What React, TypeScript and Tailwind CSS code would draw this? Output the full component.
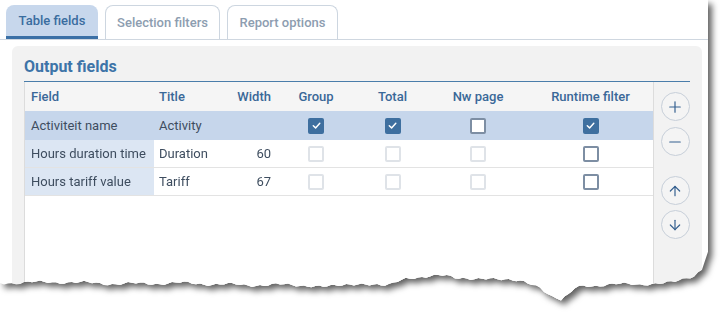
import { Plus, Minus, ArrowUp, ArrowDown } from 'lucide-react';

type Box = 'on' | 'off' | 'dis';

const rows: { field: string; title: string; width: string; boxes: Box[]; selected?: boolean }[] = [
  { field: 'Activiteit name', title: 'Activity', width: '', boxes: ['on', 'on', 'off', 'on'], selected: true },
  { field: 'Hours duration time', title: 'Duration', width: '60', boxes: ['dis', 'dis', 'dis', 'off'] },
  { field: 'Hours tariff value', title: 'Tariff', width: '67', boxes: ['dis', 'dis', 'dis', 'off'] },
];

// torn paper edge along the bottom
const tornEdge = () => {
  const anchors: [number, number][] = [
    [0, 283], [60, 282], [120, 284], [180, 283], [240, 285], [300, 285], [350, 286],
    [385, 284], [410, 279], [430, 275], [455, 277], [490, 279], [520, 282], [540, 287],
    [552, 296], [561, 301], [568, 296], [575, 288], [600, 285], [640, 284], [675, 282],
    [694, 278], [702, 270], [708, 252],
  ];
  const pts: string[] = ['0px 0px', '708px 0px'];
  for (let i = anchors.length - 1; i > 0; i--) {
    const [x1, y1] = anchors[i];
    const [x0, y0] = anchors[i - 1];
    const steps = Math.max(1, Math.round((x1 - x0) / 4));
    for (let s = 0; s < steps; s++) {
      const t = s / steps;
      const x = x1 + (x0 - x1) * t;
      const jitter = Math.sin(x * 1.7) * 1.2 + Math.sin(x * 0.43) * 0.9;
      pts.push(`${x.toFixed(1)}px ${(y1 + (y0 - y1) * t + jitter).toFixed(1)}px`);
    }
  }
  pts.push('0px 283px');
  return `polygon(${pts.join(', ')})`;
};

function Check({ state }: { state: Box }) {
  if (state === 'on') {
    return (
      <div className="w-4 h-4 rounded-[2px] bg-[#3e6f9f] flex items-center justify-center">
        <svg width="11" height="11" viewBox="0 0 12 12" fill="none">
          <path d="M2.5 6.3 L5 8.6 L9.6 3.6" stroke="white" strokeWidth="1.6" strokeLinecap="round" strokeLinejoin="round" />
        </svg>
      </div>
    );
  }
  if (state === 'off') {
    return <div className="w-4 h-4 rounded-[2px] border-2 border-[#7d8ea3] bg-white" />;
  }
  return <div className="w-4 h-4 rounded-[2px] border-2 border-[#dfe3e8] bg-white" />;
}

function RoundButton({ children }: { children: React.ReactNode }) {
  return (
    <button className="w-[29px] h-[29px] rounded-full border border-[#c6ced8] bg-[#f4f4f4] flex items-center justify-center text-[#35608f]">
      {children}
    </button>
  );
}

const cols = 'grid grid-cols-[129px_77px_45px_80px_73px_98px_127px]';

export default function App() {
  return (
    <div className="w-[723px] h-[320px] bg-white overflow-hidden font-['Roboto',sans-serif]">
      <div className="[filter:drop-shadow(4px_4px_3px_rgba(0,0,0,0.62))]">
        <div className="w-[708px] h-[305px] bg-white flex flex-col" style={{ clipPath: tornEdge() }}>
          {/* Tabs */}
          <div className="flex items-end gap-[7px] pl-[6px] pt-[5px] border-b border-[#cfd7e0] h-[40px]">
            <div className="w-[92px] h-[34px] rounded-t-[8px] bg-[#c7d7ec] border-b-[3px] border-[#3b70a6] flex items-center justify-center text-[13px] font-medium text-[#3a6d9f]">
              Table fields
            </div>
            <div className="w-[115px] h-[34px] rounded-t-[8px] border border-b-0 border-[#cdd6e0] flex items-center justify-center text-[13px] font-medium text-[#8d9db0]">
              Selection filters
            </div>
            <div className="w-[111px] h-[34px] rounded-t-[8px] border border-b-0 border-[#cdd6e0] flex items-center justify-center text-[13px] font-medium text-[#8d9db0]">
              Report options
            </div>
          </div>

          {/* Panel */}
          <div className="mt-[6px] ml-[12px] w-[690px] flex-1 rounded-t-[6px] bg-[#f2f2f2] flex flex-col">
            <div className="mx-[12px] pt-[11px] h-[36px] border-b-[1.5px] border-[#4a7daa] text-[16px] font-bold text-[#3d74a8] leading-[20px]">
              Output fields
            </div>
            <div className="flex flex-1 ml-[12px]">
              <div className="w-[629px] bg-white border-l border-[#dcdcdc] text-[13px]">
                <div className={`${cols} h-[29px] bg-[#f5f5f5] items-center font-medium text-[#3a6898]`}>
                  <div className="pl-[6px]">Field</div>
                  <div className="pl-[5px]">Title</div>
                  <div className="text-right pr-[5px]">Width</div>
                  <div className="text-center">Group</div>
                  <div className="text-center">Total</div>
                  <div className="text-center">Nw page</div>
                  <div className="text-center">Runtime filter</div>
                </div>
                {rows.map((r) => (
                  <div
                    key={r.field}
                    className={`${cols} items-stretch text-[#3e4d5f] ${
                      r.selected ? 'h-[29px] bg-[#c6d6eb]' : 'h-[28px] border-b border-[#e3e3e3]'
                    }`}
                  >
                    <div className={`pl-[6px] flex items-center ${r.selected ? '' : 'bg-[#dce6f3]'}`}>{r.field}</div>
                    <div className="pl-[5px] flex items-center">{r.title}</div>
                    <div className="pr-[5px] flex items-center justify-end">{r.width}</div>
                    {r.boxes.map((b, i) => (
                      <div key={i} className="flex items-center justify-center">
                        <Check state={b} />
                      </div>
                    ))}
                  </div>
                ))}
              </div>
              <div className="w-[37px] border-l border-[#dcdcdc] flex flex-col items-center pl-[6px] pt-[10px]">
                <RoundButton>
                  <Plus size={18} strokeWidth={1.6} />
                </RoundButton>
                <div className="h-[6px]" />
                <RoundButton>
                  <Minus size={18} strokeWidth={1.6} />
                </RoundButton>
                <div className="h-[20px]" />
                <RoundButton>
                  <ArrowUp size={16} strokeWidth={1.8} />
                </RoundButton>
                <div className="h-[5px]" />
                <RoundButton>
                  <ArrowDown size={16} strokeWidth={1.8} />
                </RoundButton>
              </div>
            </div>
          </div>
        </div>
      </div>
    </div>
  );
}
